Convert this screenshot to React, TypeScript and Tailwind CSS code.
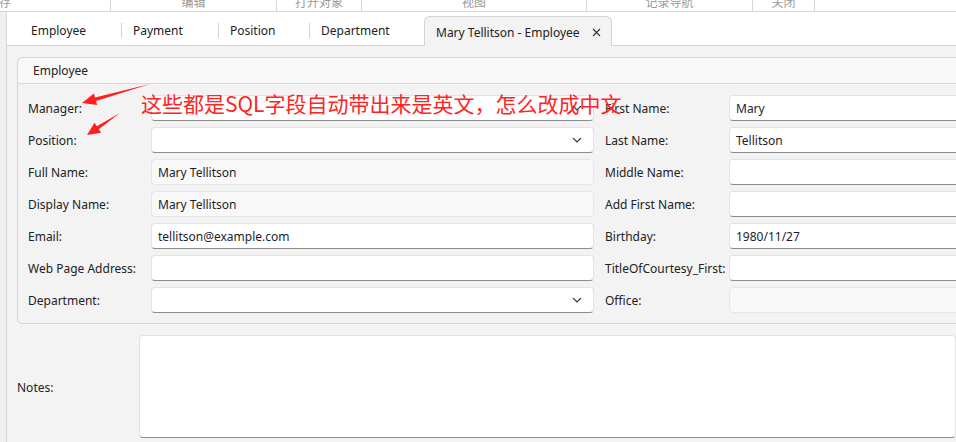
import React from 'react';

type FieldKind = 'text' | 'combo' | 'readonly';

type Field = { label: string; value?: string; kind: FieldKind };

const LEFT: Field[] = [
  { label: 'Manager:', kind: 'combo' },
  { label: 'Position:', kind: 'combo' },
  { label: 'Full Name:', value: 'Mary Tellitson', kind: 'readonly' },
  { label: 'Display Name:', value: 'Mary Tellitson', kind: 'readonly' },
  { label: 'Email:', value: 'tellitson@example.com', kind: 'text' },
  { label: 'Web Page Address:', kind: 'text' },
  { label: 'Department:', kind: 'combo' },
];

const RIGHT: Field[] = [
  { label: 'First Name:', value: 'Mary', kind: 'text' },
  { label: 'Last Name:', value: 'Tellitson', kind: 'text' },
  { label: 'Middle Name:', kind: 'text' },
  { label: 'Add First Name:', kind: 'text' },
  { label: 'Birthday:', value: '1980/11/27', kind: 'text' },
  { label: 'TitleOfCourtesy_First:', kind: 'text' },
  { label: 'Office:', kind: 'readonly' },
];

const RIBBON = [
  { w: 'w-[111px]', text: '保存', cls: 'justify-end pr-[99px]' },
  { w: 'w-[166px]', text: '编辑', cls: 'justify-center' },
  { w: 'w-[85px]', text: '打开对象', cls: 'justify-center' },
  { w: 'w-[225px]', text: '视图', cls: 'justify-center' },
  { w: 'w-[166px]', text: '记录导航', cls: 'justify-center' },
  { w: 'w-[62px]', text: '关闭', cls: 'justify-center' },
];

function Chevron() {
  return (
    <svg width="10" height="6" viewBox="0 0 10 6" className="shrink-0">
      <polyline points="1,1 5,5 9,1" fill="none" stroke="#333" strokeWidth="1.1" />
    </svg>
  );
}

function Input({ field, className = '' }: { field: Field; className?: string }) {
  const base =
    field.kind === 'readonly'
      ? 'bg-[#f8f8f8] border-[#e6e6e6]'
      : 'bg-white border-[#e3e3e3] border-b-[#8c8c8c]';
  return (
    <div className={`h-[26px] rounded-[4px] border flex items-center justify-between pl-[6px] pr-[11px] ${base} ${className}`}>
      <span className="text-[#1d1d2b] pt-[2px]">{field.value ?? ''}</span>
      {field.kind === 'combo' && <Chevron />}
    </div>
  );
}

function Tab({ label, width, pl }: { label: string; width: string; pl: string }) {
  return (
    <div className={`h-full flex items-center ${width} ${pl}`}>
      <span className="pt-[5px]">{label}</span>
    </div>
  );
}

function Sep() {
  return <div className="w-px h-[15px] bg-[#d3d3d3] self-center mt-[3px]" />;
}

export default function App() {
  return (
    <div className="relative w-[956px] h-[442px] overflow-hidden bg-[#f3f3f3] text-[12px] text-[#222] font-['Noto_Sans','Noto_Sans_CJK_SC',sans-serif]">
      {/* ribbon group captions, cut off at the top */}
      <div className="h-[12px] bg-white border-b border-[#d6d6d6] flex overflow-hidden">
        {RIBBON.map((r, i) => (
          <div key={i} className={`${r.w} h-full border-r border-[#d6d6d6] flex overflow-hidden ${r.cls}`}>
            <span className="text-[12px] leading-[12px] -mt-[3px] text-[#9a9a9a] whitespace-nowrap">{r.text}</span>
          </div>
        ))}
      </div>

      <div className="flex h-[430px]">
        <div className="w-[7px] bg-[#f0f0f0] border-r border-[#d6d6d6]" />

        <div className="flex-1 flex flex-col min-w-0">
          {/* document tabs */}
          <div className="h-[34px] bg-white border-b border-[#d6d6d6] flex items-end shrink-0">
            <Tab label="Employee" width="w-[114px]" pl="pl-[24px]" />
            <Sep />
            <Tab label="Payment" width="w-[96px]" pl="pl-[11px]" />
            <Sep />
            <Tab label="Position" width="w-[90px]" pl="pl-[11px]" />
            <Sep />
            <Tab label="Department" width="w-[114px]" pl="pl-[11px]" />
            <div className="relative -mb-px h-[30px] w-[188px] bg-[#f3f3f3] border border-b-0 border-[#d3d3d3] rounded-t-[6px] flex items-center justify-between pl-[11px] pr-[10px]">
              <span className="pt-[2px]">Mary Tellitson - Employee</span>
              <svg width="9" height="9" viewBox="0 0 9 9" className="mt-[2px]">
                <path d="M1 1 L8 8 M8 1 L1 8" stroke="#333" strokeWidth="1.1" />
              </svg>
            </div>
          </div>

          {/* form */}
          <div className="pl-[10px] pt-[11px]">
            <div className="w-[1000px] border border-[#d5d5d5] rounded-[5px]">
              <div className="h-[26px] border-b border-[#d9d9d9] bg-[#f8f8f8] rounded-t-[5px] flex items-center pl-[15px]">
                Employee
              </div>
              <div className="pl-[10px] pt-[11px] pb-[10px] grid grid-cols-[123px_443px_135px_260px] gap-y-[6px]">
                {LEFT.map((l, i) => (
                  <React.Fragment key={i}>
                    <div className="flex items-center h-[26px] pt-[2px]">{l.label}</div>
                    <Input field={l} />
                    <div className="flex items-center h-[26px] pt-[2px] pl-[11px] whitespace-nowrap">{RIGHT[i].label}</div>
                    <Input field={RIGHT[i]} />
                  </React.Fragment>
                ))}
              </div>
            </div>

            <div className="mt-[11px] flex">
              <div className="w-[124px] flex items-center pt-[2px]">Notes:</div>
              <div className="w-[830px] h-[103px] bg-white rounded-[4px] border border-[#e3e3e3] border-b-[#8c8c8c]" />
            </div>
          </div>
        </div>
      </div>

      {/* annotation arrows */}
      <svg className="absolute left-0 top-0 pointer-events-none" width="956" height="442">
        <polygon points="150,84 96,100.9 97.1,105 82,103 93.9,93.4 95,97.5" fill="#ff1f1f" />
        <polygon points="120,113 98.8,129.3 101.1,132.8 87,135 94.5,122.8 96.8,126.3" fill="#ff1f1f" />
      </svg>
      <div className="absolute left-[141px] top-[93px] text-[21px] leading-none text-[#ff2424] whitespace-nowrap font-['Noto_Sans_CJK_SC','Noto_Sans',sans-serif]">
        这些都是SQL字段自动带出来是英文，怎么改成中文
      </div>
    </div>
  );
}
